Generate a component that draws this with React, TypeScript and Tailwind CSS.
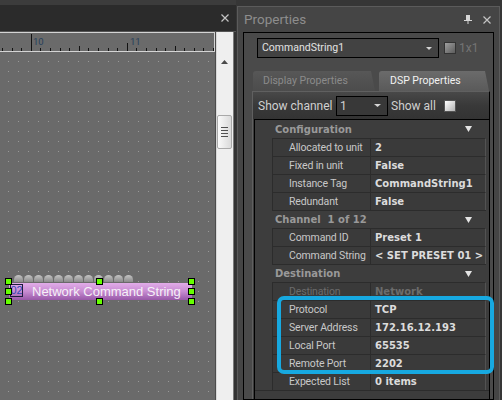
import React from 'react';

type Row =
  | { kind: 'cat'; label: string; first?: boolean }
  | { kind: 'prop'; name: string; value: string; disabled?: boolean };

const rows: Row[] = [
  { kind: 'cat', label: 'Configuration', first: true },
  { kind: 'prop', name: 'Allocated to unit', value: '2' },
  { kind: 'prop', name: 'Fixed in unit', value: 'False' },
  { kind: 'prop', name: 'Instance Tag', value: 'CommandString1' },
  { kind: 'prop', name: 'Redundant', value: 'False' },
  { kind: 'cat', label: 'Channel  1 of 12' },
  { kind: 'prop', name: 'Command ID', value: 'Preset 1' },
  { kind: 'prop', name: 'Command String', value: '< SET PRESET 01 >' },
  { kind: 'cat', label: 'Destination' },
  { kind: 'prop', name: 'Destination', value: 'Network', disabled: true },
  { kind: 'prop', name: 'Protocol', value: 'TCP' },
  { kind: 'prop', name: 'Server Address', value: '172.16.12.193' },
  { kind: 'prop', name: 'Local Port', value: '65535' },
  { kind: 'prop', name: 'Remote Port', value: '2202' },
  { kind: 'prop', name: 'Expected List', value: '0 items' },
];

function Caret({ w = 7, h = 4, className }: { w?: number; h?: number; className?: string }) {
  return (
    <svg width={w} height={h} viewBox={`0 0 ${w} ${h}`} className={className}>
      <polygon points={`0,0 ${w},0 ${w / 2},${h}`} fill="currentColor" />
    </svg>
  );
}

function CloseIcon() {
  return (
    <svg width="8" height="8" viewBox="0 0 8 8" className="text-[#c4c4c4]">
      <path d="M0.5 0.5L7.5 7.5M7.5 0.5L0.5 7.5" stroke="currentColor" strokeWidth="1.2" />
    </svg>
  );
}

function PinIcon() {
  return (
    <svg width="8" height="9" viewBox="0 0 8 9" className="text-[#d6d6d6]">
      <rect x="2" y="0" width="4" height="5" fill="currentColor" />
      <rect x="0" y="5" width="8" height="1" fill="currentColor" />
      <rect x="3.5" y="6" width="1" height="3" fill="currentColor" />
    </svg>
  );
}

function Ruler() {
  const ticks = [];
  for (let k = -3; k <= 19; k++) {
    const x = Math.round(30.7 + 9.6 * k);
    let y = 15;
    if (k === 0) y = 1;
    else if (k === 10) y = 10;
    else if (k % 5 === 0) y = 13;
    ticks.push(<rect key={k} x={x} y={y} width="1" height={18 - y} fill="#121212" />);
  }
  return (
    <div className="h-[20px] shrink-0 border-y border-r border-[#d4d4d4] bg-[#6a6a6a]">
      <svg width="214" height="18" className="block">
        {ticks}
        <text x="33" y="12" fontSize="9.5" fill="#26405c" fontFamily="Roboto, sans-serif">10</text>
        <text x="130" y="12" fontSize="9.5" fill="#26405c" fontFamily="Roboto, sans-serif">11</text>
      </svg>
    </div>
  );
}

function Handle({ className }: { className: string }) {
  return <div className={`absolute w-[7px] h-[7px] bg-[#66ff00] border border-black ${className}`} />;
}

function CanvasNode() {
  return (
    <div className="absolute left-[9px] top-[223px] w-[183px]">
      <div className="h-[8px] flex items-start gap-[1px] pl-[5px]">
        {Array.from({ length: 12 }).map((_, i) => (
          <div key={i} className="w-[9px] h-[7px] rounded-t-full bg-linear-to-b from-[#c4c4c4] to-[#8a8a8a]" />
        ))}
      </div>
      <div className="h-[17px] flex items-start pt-[1px] pl-[1px] bg-linear-to-b from-[#e2ace9] via-[#c68bd0] to-[#9858a8]">
        <div className="w-[13px] h-[13px] border border-[#1d1d3d] flex items-center justify-center text-[11px] leading-none text-[#3448b4] font-['Liberation_Sans',sans-serif]">
          02
        </div>
        <span className="ml-[9px] text-[13px] leading-[15px] text-[#f6f0f8] font-['Liberation_Sans',sans-serif]">
          Network Command String
        </span>
      </div>
      <Handle className="left-[-4px] top-[3px]" />
      <Handle className="left-[-4px] top-[13px]" />
      <Handle className="left-[-4px] top-[23px]" />
      <Handle className="left-[87px] top-[3px]" />
      <Handle className="left-[87px] top-[23px]" />
      <Handle className="left-[179px] top-[3px]" />
      <Handle className="left-[179px] top-[13px]" />
      <Handle className="left-[179px] top-[23px]" />
    </div>
  );
}

function Canvas() {
  return (
    <div className="flex-1 relative overflow-hidden bg-[#6a6a6a]">
      <svg className="absolute inset-0" width="215" height="348">
        <defs>
          <pattern id="dots" width="10" height="10" x="8" y="9" patternUnits="userSpaceOnUse">
            <rect width="1" height="1" fill="#9a9a9a" />
          </pattern>
        </defs>
        <rect width="100%" height="100%" fill="url(#dots)" />
      </svg>
      <CanvasNode />
    </div>
  );
}

function Scrollbar() {
  return (
    <div className="w-[17px] border-l border-[#d8d8d8] bg-[#efefef] flex flex-col items-start">
      <Caret w={7} h={4} className="text-[#4a4a4a] rotate-180 mt-[28px] ml-[4px]" />
      <div className="mt-[51px] w-[15px] h-[34px] rounded-[2px] border border-[#a9a9a9] bg-linear-to-r from-[#fafafa] to-[#dadada] flex flex-col items-center justify-center gap-[2px]">
        <div className="w-[7px] h-px bg-[#505050]" />
        <div className="w-[7px] h-px bg-[#505050]" />
        <div className="w-[7px] h-px bg-[#505050]" />
        <div className="w-[7px] h-px bg-[#505050]" />
      </div>
    </div>
  );
}

function LeftPane() {
  return (
    <div className="w-[236px] shrink-0 flex flex-col pt-[5px] bg-[#3c3c3c]">
      <div className="h-[27px] shrink-0 bg-[#2b2b2b] border-b border-[#555] flex items-center justify-end pr-[7px]">
        <CloseIcon />
      </div>
      <div className="flex-1 flex min-h-0">
        <div className="w-[215px] flex flex-col">
          <Ruler />
          <Canvas />
        </div>
        <div className="w-px bg-[#4c4c4c]" />
        <Scrollbar />
        <div className="w-px bg-[#7a7a7a]" />
        <div className="w-[2px] bg-[#333]" />
      </div>
    </div>
  );
}

function GridRow({ row }: { row: Row }) {
  if (row.kind === 'cat') {
    return (
      <div className="h-[18px] flex bg-[#3d3d3d]">
        <div className="w-[17px] shrink-0" />
        <div
          className={`w-[214px] flex items-center justify-between pl-[3px] pr-[14px] border-[#2c2c2c] ${row.first ? '' : 'border-t'}`}
        >
          <span className="whitespace-pre text-[10px] font-bold text-[#999] font-['DejaVu_Sans',sans-serif]">
            {row.label}
          </span>
          <Caret w={7} h={6} className="text-[#e4e4e4]" />
        </div>
      </div>
    );
  }
  const nameColor = row.disabled ? 'text-[#6c6c6c]' : 'text-[#c8c8c8]';
  const valueColor = row.disabled ? 'text-[#6c6c6c]' : 'text-[#dcdcdc]';
  return (
    <div className="h-[18px] flex">
      <div className="w-[17px] shrink-0 bg-[#3d3d3d]" />
      <div className={`w-[98px] shrink-0 flex items-center pl-[16px] border-l border-t border-[#2c2c2c] bg-[#3a3a3a] text-[10.5px] tracking-[-0.15px] whitespace-nowrap ${nameColor}`}>
        {row.name}
      </div>
      <div className={`w-[116px] shrink-0 flex items-center pl-[4px] border-l border-t border-r border-[#2c2c2c] border-r-[#525252] bg-[#3a3a3a] text-[10px] font-bold whitespace-nowrap font-['DejaVu_Sans',sans-serif] ${valueColor}`}>
        {row.value}
      </div>
    </div>
  );
}

function PropertiesPanel() {
  return (
    <div className="w-[263px] shrink-0 ml-px mt-[6px] border-x border-t border-[#5b5b5b] bg-[#454545] flex flex-col">
      <div className="h-[25px] shrink-0 flex items-center pl-[6px] pr-[8px]">
        <span className="text-[13.5px] text-[#8d8d8d]">Properties</span>
        <div className="ml-auto flex items-center gap-[11px]">
          <PinIcon />
          <CloseIcon />
        </div>
      </div>
      <div className="flex-1 mx-[5px] border border-black bg-[#4a4a4a] flex flex-col min-h-0">
        <div className="mt-[5px] pl-[13px] flex items-center h-[20px]">
          <div className="w-[182px] h-[20px] border border-black bg-[#424242] flex items-center pl-[4px] pr-[6px] text-[10.5px] text-[#e2e2e2]">
            CommandString1
            <Caret w={6} h={3} className="ml-auto text-[#d4d4d4]" />
          </div>
          <div className="ml-[5px] w-[12px] h-[12px] border border-[#333] bg-linear-to-br from-[#a0a0a0] to-[#5c5c5c]" />
          <span className="ml-[3px] text-[12px] text-[#747474]">1x1</span>
        </div>

        <div className="mt-[13px] pl-[9px] flex items-end gap-[4px] h-[20px]">
          <div className="w-[122px] h-[20px] flex items-center pl-[10px] rounded-tl-[3px] bg-linear-to-b from-[#575757] to-[#4c4c4c] text-[10.5px] text-[#8b8b8b] [clip-path:polygon(0_0,calc(100%-4px)_0,100%_100%,0_100%)]">
            Display Properties
          </div>
          <div className="w-[110px] h-[20px] flex items-center pl-[11px] rounded-tl-[3px] bg-linear-to-b from-[#6b6b6b] to-[#5a5a5a] text-[10.5px] text-[#f2f2f2] [clip-path:polygon(0_0,calc(100%-4px)_0,100%_100%,0_100%)]">
            DSP Properties
          </div>
        </div>

        <div className="flex-1 ml-[8px] mr-[3px] border-l border-t border-[#606060] border-r border-r-black bg-[#3c3c3c] flex flex-col min-h-0">
          <div className="h-[27px] shrink-0 flex items-center pl-[5px] bg-linear-to-b from-[#484848] via-[#393939] to-[#333333] text-[12px] text-[#d0d0d0]">
            <span className="w-[78px]">Show channel</span>
            <div className="w-[52px] h-[20px] border border-black bg-[#383838] flex items-center pl-[3px] pr-[6px]">
              1
              <Caret w={7} h={3} className="ml-auto text-[#d4d4d4]" />
            </div>
            <span className="ml-[3px] w-[53px]">Show all</span>
            <div className="w-[12px] h-[12px] border border-[#555] bg-linear-to-br from-[#ffffff] to-[#b4b4b4]" />
          </div>
          <div className="ml-px flex-1 border-t border-l border-black flex flex-col">
            {rows.map((r, i) => (
              <GridRow key={i} row={r} />
            ))}
            <div className="flex-1 border-t border-[#2c2c2c] bg-[#3c3c3c]" />
          </div>
        </div>
      </div>
    </div>
  );
}

export default function App() {
  return (
    <div className="w-[502px] h-[400px] overflow-hidden relative flex bg-[#363636] font-['Roboto',sans-serif]">
      <LeftPane />
      <PropertiesPanel />
      <div className="absolute left-[277px] top-[296px] w-[217px] h-[78px] border-4 border-[#17a9e1] rounded-[7px]" />
    </div>
  );
}
